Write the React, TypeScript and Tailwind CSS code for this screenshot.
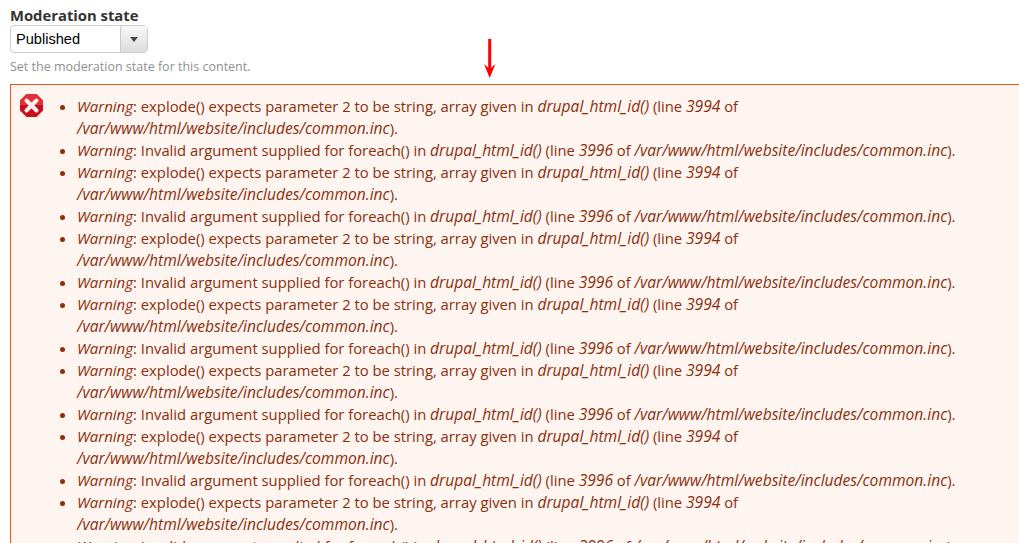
import React from "react";

const OPEN_SANS = "font-['Open_Sans',sans-serif]";

function ExplodeWarning() {
    return (
        <li>
            <em className="text-[15px]">Warning</em>: explode() expects parameter 2 to be string, array given in <em className="text-[15.6px]">drupal_html_id()</em> (line <em className="text-[15.6px]">3994</em> of <em className="text-[15.6px]">/var/www/html/website/includes/common.inc</em>).
        </li>
    );
}

function ForeachWarning() {
    return (
        <li>
            <em className="text-[15px]">Warning</em>: Invalid argument supplied for foreach() in <em className="text-[15.6px]">drupal_html_id()</em> (line <em className="text-[15.6px]">3996</em> of <em className="text-[15.6px]">/var/www/html/website/includes/common.inc</em>).
        </li>
    );
}

function ErrorIcon() {
    return (
        <svg width="23" height="23" viewBox="0 0 23 23" className="-mt-px shrink-0">
            <polygon points="6.5,0 16.5,0 23,6.5 23,16.5 16.5,23 6.5,23 0,16.5 0,6.5" fill="#c8101c" />
            <polygon points="6.5,0 16.5,0 23,6.5 23,11 0,11 0,6.5" fill="#e0303a" />
            <path d="M6.5 6.5 L16.5 16.5 M16.5 6.5 L6.5 16.5" stroke="#f6f0f0" strokeWidth="4" strokeLinecap="round" />
        </svg>
    );
}

export default function App() {
    const rows = Array.from({ length: 10 }, (_, i) => i);

    return (
        <div className={`relative h-[543px] w-[1019px] overflow-hidden bg-white pl-[10px] pt-[5px] ${OPEN_SANS}`}>
            <label className="block text-[14.8px] font-bold leading-[20px] text-[#333333]">Moderation state</label>
            <div className="flex h-[28px] w-[138px] rounded-[4px] border border-[#cccccc] font-['Liberation_Sans',sans-serif] text-[14.6px] text-black">
                <div className="flex flex-1 items-center pl-[5px] pt-px">Published</div>
                <div className="flex w-[27px] items-center justify-center border-l border-[#cccccc] bg-gradient-to-b from-[#f8f8f8] to-[#dddddd]">
                    <div className="h-0 w-0 border-x-[4px] border-t-[5px] border-x-transparent border-t-[#444444]" />
                </div>
            </div>
            <p className="mt-[5px] text-[12.5px] leading-[17px] text-[#8f8f8f]">Set the moderation state for this content.</p>

            {/* Error list */}
            <div className="mt-[9px] flex w-[1040px] gap-[9px] border border-[#ed541d] bg-[#fef5f1] pl-[9px] pt-[10px] text-[14.8px] leading-[22px] text-[#8c2e0b]">
                <ErrorIcon />
                <ul className="w-[950px] list-disc pl-[25px]">
                    {rows.map((i) => (
                        <React.Fragment key={i}>
                            <ExplodeWarning />
                            <ForeachWarning />
                        </React.Fragment>
                    ))}
                </ul>
            </div>

            {/* Red arrow annotation */}
            <svg width="14" height="40" viewBox="0 0 14 40" className="absolute left-[483px] top-[39px]">
                <rect x="5.2" y="0" width="3" height="30" fill="#ff0000" />
                <polygon points="1,25 6.7,30 12.4,25 6.7,39" fill="#ff0000" />
            </svg>
        </div>
    );
}
